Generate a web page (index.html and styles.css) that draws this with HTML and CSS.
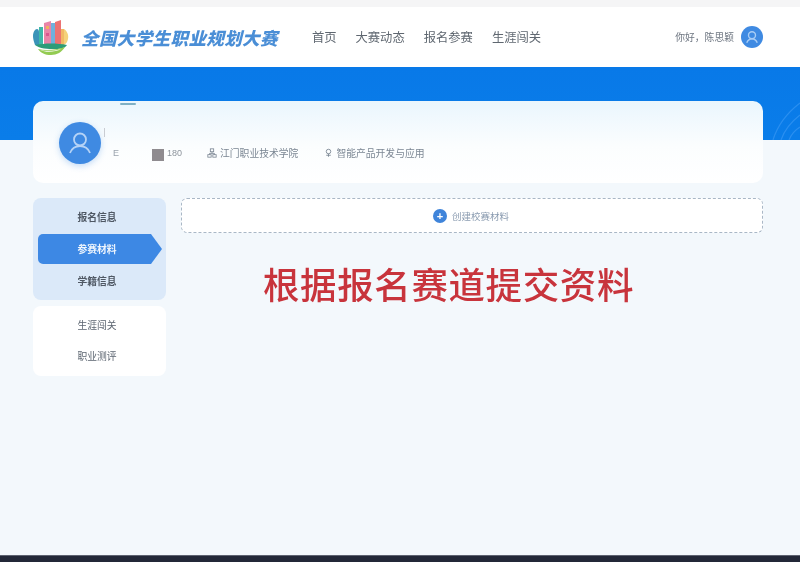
FILE: index.html
```html
<!DOCTYPE html>
<html lang="zh-CN">
<head>
<meta charset="utf-8">
<title>全国大学生职业规划大赛</title>
<link rel="stylesheet" href="styles.css">
</head>
<body>
<div class="page">
  <div class="topstrip"></div>
  <header class="header">
    <div class="brand">
      <svg class="logo" width="38" height="38" viewBox="0 0 38 38">
        <path d="M1 18c0-4 2-7 4-7 1 0 2 1 2 3v13H3c-1-3-2-6-2-9z" fill="#3a93b8"/>
        <rect x="7" y="9" width="4" height="18" fill="#3fb9a8"/>
        <path d="M12 5l7-2v24h-7z" fill="#e985a8"/>
        <rect x="14" y="8" width="3" height="3" fill="#f0b45e"/>
        <rect x="14" y="15" width="3" height="3" fill="#d9588e"/>
        <rect x="19" y="5" width="4" height="22" fill="#6fb0dc"/>
        <path d="M23 4l6-2v25h-6z" fill="#ec7272"/>
        <rect x="29" y="11" width="3" height="16" fill="#f2b866"/>
        <path d="M32 11c3 2 5 6 4 10-.5 3-2 5-4 6z" fill="#f5d27a"/>
        <path d="M3 27c10-2 22-2 32 0-2 3-6 4-11 4-9 0-16 0-21-4z" fill="#2d9c78"/>
        <path d="M6 31c8 2 18 1 27-2-3 5-8 8-14 8-6 0-10-2-13-6z" fill="#93cb52"/>
        <path d="M8 32c7 1.500 14 1 21-1-5 3-15 4-21 1z" fill="#ffffff"/>
      </svg>
      <span class="brand-name">全国大学生职业规划大赛</span>
    </div>
    <nav class="nav">
      <a>首页</a>
      <a>大赛动态</a>
      <a>报名参赛</a>
      <a>生涯闯关</a>
    </nav>
    <div class="user">
      <span class="hello">你好，陈思颖</span>
      <span class="avatar avatar-sm">
        <svg width="14" height="14" viewBox="0 0 24 24" fill="none" stroke="#a9cdf5" stroke-width="2.400">
          <circle cx="12" cy="9" r="6"/>
          <path d="M3 22c2-5 5-7 9-7s7 2 9 7"/>
        </svg>
      </span>
    </div>
  </header>
  <div class="stage">
    <svg class="stripes" width="37" height="73" viewBox="0 0 37 73" fill="none" stroke="#2a8ff0" stroke-width="1.200">
      <path d="M10 73C14 60 24 46 37 36M18 73C21 64 28 55 37 48M26 73C28 68 32 63 37 60"/>
    </svg>
    <section class="profile">
      <i class="name-mark"></i>
      <span class="avatar avatar-lg">
        <svg width="24" height="24" viewBox="0 0 24 24" fill="none" stroke="#b5d3f6" stroke-width="1.800">
          <circle cx="12" cy="8.500" r="6"/>
          <path d="M2 22c2-5 5-7 10-7s8 2 10 7"/>
        </svg>
      </span>
      <div class="profile-details">
        <i class="name-bar"></i>
        <div class="profile-meta">
          <span class="meta-id"><span class="id-letter">E</span><i class="mosaic"></i>180</span>
          <span class="meta-item school">
            <svg width="10" height="10" viewBox="0 0 12 12" fill="none" stroke="#7c8794" stroke-width="1">
              <rect x="4" y="1" width="4" height="3.500"/>
              <rect x="1" y="8" width="4" height="3"/>
              <rect x="7" y="8" width="4" height="3"/>
              <path d="M6 4.500V6.500M3 8V6.500H9V8"/>
            </svg>
            江门职业技术学院
          </span>
          <span class="meta-item">
            <svg width="9" height="10" viewBox="0 0 12 12" fill="none" stroke="#7c8794" stroke-width="1.200">
              <circle cx="6" cy="4" r="3"/>
              <path d="M6 7v4M3 9h6"/>
            </svg>
            智能产品开发与应用
          </span>
        </div>
      </div>
    </section>
    <div class="content">
      <aside class="side">
        <ul class="menu menu-blue">
          <li class="menu-item strong">报名信息</li>
          <li class="menu-item active">参赛材料</li>
          <li class="menu-item strong">学籍信息</li>
        </ul>
        <ul class="menu menu-white">
          <li class="menu-item">生涯闯关</li>
          <li class="menu-item">职业测评</li>
        </ul>
      </aside>
      <main class="main">
        <div class="create">
          <span class="plus">+</span>
          <span class="create-text">创建校赛材料</span>
        </div>
        <p class="notice">根据报名赛道提交资料</p>
      </main>
    </div>
  </div>
  <footer class="footer"></footer>
</div>
</body>
</html>
```

FILE: styles.css
```css
* { box-sizing: border-box; }

html, body {
  margin: 0;
  padding: 0;
}

body {
  font-family: "Noto Sans CJK SC", "Liberation Sans", sans-serif;
  color: #5c6570;
  overflow: hidden;
}

.page {
  width: 800px;
  height: 562px;
  display: flex;
  flex-direction: column;
  overflow: hidden;
  background: #f3f8fc;
  filter: blur(0.45px);
}

.topstrip {
  height: 7px;
  background: #f5f5f6;
}

.header {
  height: 60px;
  background: #fff;
  display: flex;
  align-items: center;
  padding: 0 37px 0 32px;
}

.brand {
  display: flex;
  align-items: center;
  gap: 11px;
}

.logo { display: block; }

.brand-name {
  font-size: 17.500px;
  font-weight: 900;
  font-style: italic;
  color: #4a8ed6;
  letter-spacing: 0.4px;
  white-space: nowrap;
}

.nav {
  display: flex;
  gap: 19px;
  margin-left: 34px;
  font-size: 12.300px;
  color: #5f6770;
}

.user {
  margin-left: auto;
  display: flex;
  align-items: center;
  gap: 7px;
}

.hello {
  font-size: 9.800px;
  color: #6d7580;
}

.avatar {
  display: flex;
  align-items: center;
  justify-content: center;
  border-radius: 50%;
  background: #3f8ae2;
  flex: none;
}

.avatar-sm {
  width: 22px;
  height: 22px;
}

.avatar-lg {
  width: 42px;
  height: 42px;
  box-shadow: 0 2px 6px rgba(63, 138, 226, .3);
}

.stage {
  position: relative;
  flex: 1;
  padding: 34px 37px 0 33px;
  background: linear-gradient(#0879e8, #0a7de9 73px, #f3f8fc 73px);
}

.stripes {
  position: absolute;
  right: 0;
  top: 0;
}

.profile {
  position: relative;
  height: 82px;
  border-radius: 10px;
  background: linear-gradient(#eaf6fd, #fbfdfe 55%, #ffffff);
  display: flex;
  align-items: flex-start;
  padding: 21px 0 0 26px;
}

.name-mark {
  position: absolute;
  left: 87px;
  top: 2px;
  width: 16px;
  height: 2px;
  border-radius: 2px;
  background: #7fb0c4;
}

.profile-details {
  position: relative;
  margin-left: 3px;
}

.name-bar {
  position: absolute;
  left: 0;
  top: 6px;
  width: 1px;
  height: 9px;
  background: #c9ccd2;
}

.profile-meta {
  display: flex;
  align-items: center;
  margin-top: 19px;
  font-size: 9.800px;
  color: #7c8794;
  height: 24px;
}

.meta-id {
  display: flex;
  align-items: center;
  width: 103px;
  padding-left: 9px;
  color: #8d949c;
  font-size: 9px;
  font-family: "Liberation Sans", sans-serif;
}

.id-letter {
  width: 39px;
  color: #9aa3ad;
}

.mosaic {
  width: 12px;
  height: 12px;
  background: #8f8b8f;
  margin: 4px 3px 0 0;
  display: block;
}

.meta-item {
  display: flex;
  align-items: center;
  gap: 3px;
}

.school {
  margin-right: 26px;
}

.content {
  display: flex;
  gap: 15px;
  margin-top: 15px;
}

.side {
  width: 133px;
  display: flex;
  flex-direction: column;
  gap: 6px;
}

.menu {
  list-style: none;
  margin: 0;
  border-radius: 8px;
  font-size: 9.800px;
}

.menu-blue {
  background: #dbe9f9;
  padding: 3px 5px 3px;
  height: 102px;
}

.menu-white {
  background: #fff;
  padding: 3px 5px 4px;
  height: 70px;
}

.menu-item {
  height: 31px;
  display: flex;
  align-items: center;
  justify-content: center;
  padding-right: 5px;
}

.menu-blue .menu-item { height: 32px; }

.strong {
  font-weight: 700;
  color: #4f5864;
}

.menu-blue .active {
  height: 30px;
  margin: 1px -1px 1px 0;
  padding-right: 6px;
  color: #eef5fd;
  font-weight: 700;
  background: #3d88e4;
  border-radius: 5px;
  clip-path: polygon(0 0, 113px 0, 100% 50%, 113px 100%, 0 100%);
}

.main {
  flex: 1;
  min-width: 0;
}

.create {
  height: 35px;
  border: 1px dashed #a9b7c6;
  border-radius: 6px;
  background: #fff;
  display: flex;
  align-items: center;
  justify-content: center;
  gap: 5px;
  padding-right: 2px;
}

.plus {
  width: 14px;
  height: 14px;
  border-radius: 50%;
  background: #3f84da;
  color: #fff;
  font-size: 11px;
  font-weight: 700;
  line-height: 14px;
  text-align: center;
  font-family: "Liberation Sans", sans-serif;
}

.create-text {
  font-size: 9.500px;
  color: #8a9bb0;
}

.notice {
  margin: 24px 0 0 82px;
  font-size: 36.500px;
  line-height: 54px;
  font-weight: 500;
  letter-spacing: 0.6px;
  color: #c8343c;
  white-space: nowrap;
}

.footer {
  height: 7px;
  background: #232838;
  border-top: 1px solid #5d6270;
}
```
